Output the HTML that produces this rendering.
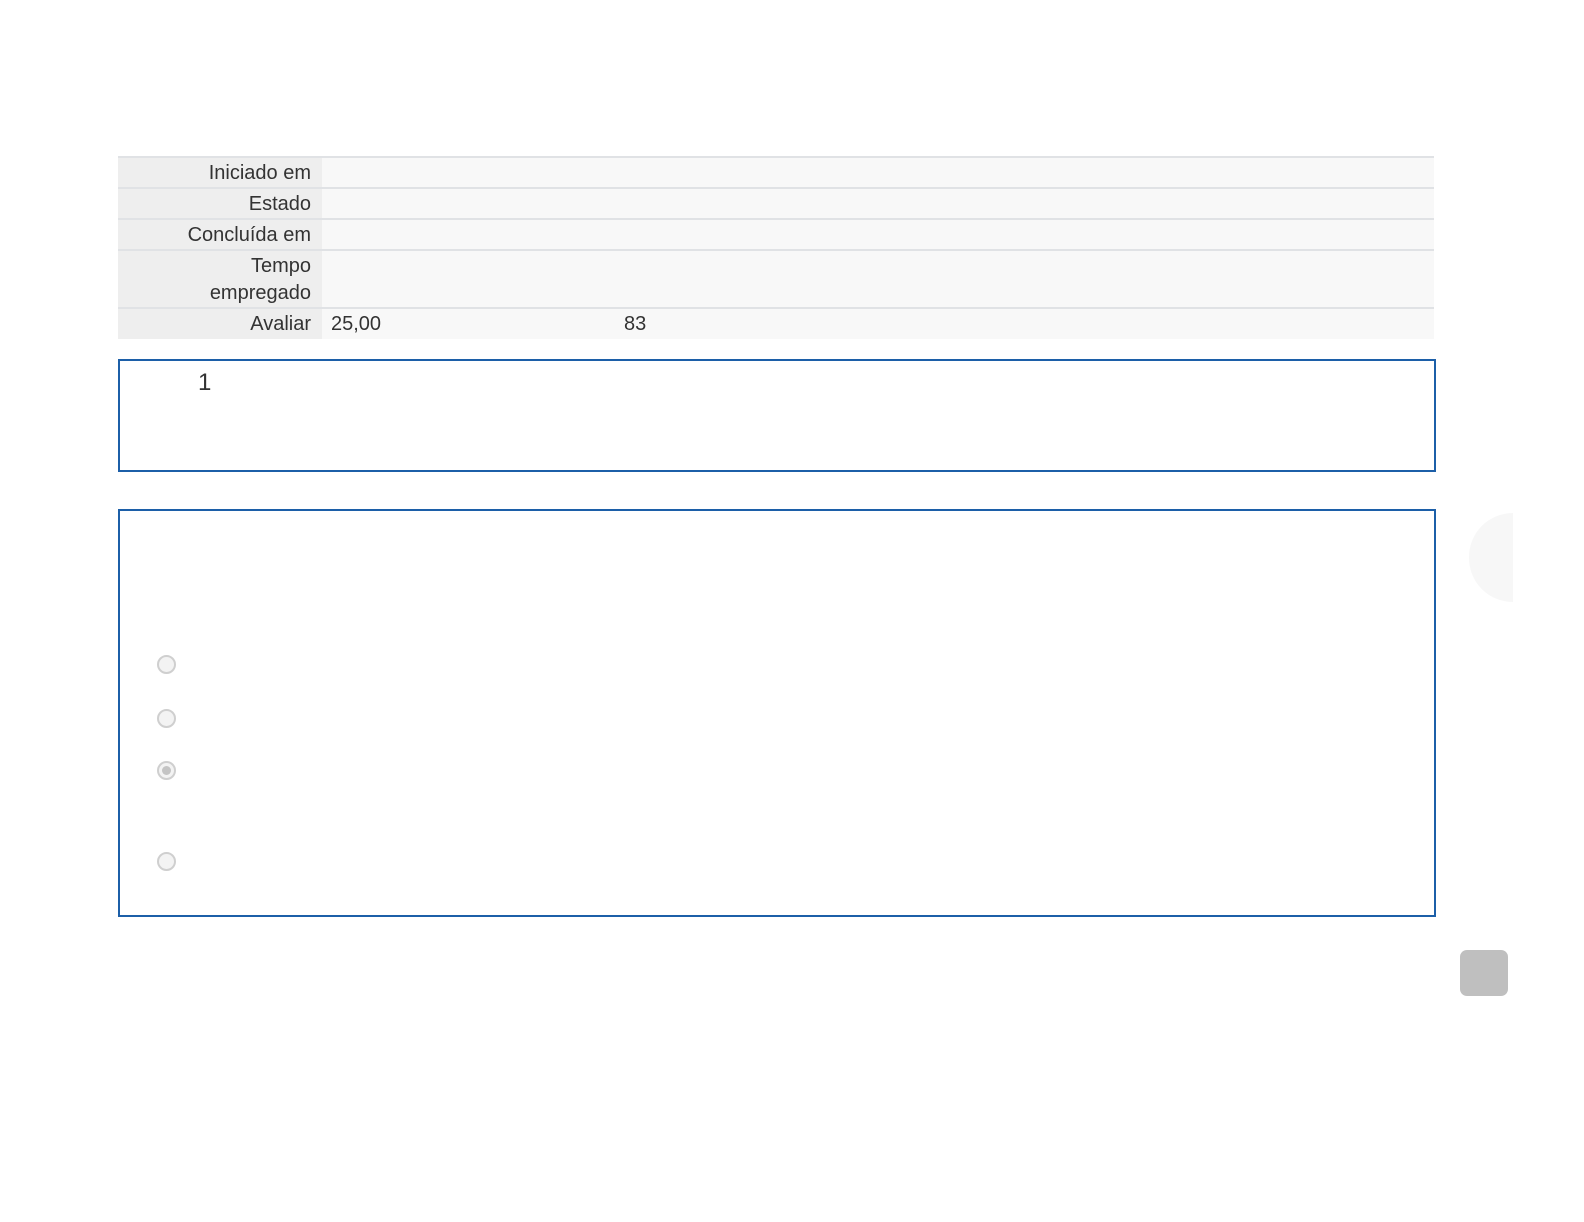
<!DOCTYPE html>
<html><head><meta charset="utf-8"><style>
body{margin:0;width:1584px;height:1222px;background:#fff;position:relative;font-family:"Liberation Sans",sans-serif;color:#333;overflow:hidden}
.row{position:absolute;left:118px;width:1316px;background:#f8f8f8;border-top:2px solid #e0e2e5;box-sizing:border-box}
.lab{position:absolute;left:0;top:0;bottom:0;width:204px;background:#eeeeee;text-align:right;box-sizing:border-box;padding-right:11px;font-size:20px;line-height:27px;padding-top:2px;color:#333}
.val{position:absolute;top:2px;font-size:20px;line-height:27px}
.box{position:absolute;left:118px;width:1318px;border:2px solid #1c5fa8;box-sizing:border-box}
.r{position:absolute;left:157px;width:19px;height:19px;border-radius:50%;border:2px solid #cfcfcf;background:#f3f3f3;box-sizing:border-box}
</style></head><body>
<div class="row" style="top:156px;height:33px"><div class="lab">Iniciado em</div></div>
<div class="row" style="top:187px;height:33px"><div class="lab">Estado</div></div>
<div class="row" style="top:218px;height:33px"><div class="lab">Concluída em</div></div>
<div class="row" style="top:249px;height:60px"><div class="lab">Tempo<br>empregado</div></div>
<div class="row" style="top:307px;height:32px"><div class="lab">Avaliar</div><div class="val" style="left:213px">25,00</div><div class="val" style="left:506px">83</div></div>
<div class="box" style="top:359px;height:113px"><div style="position:absolute;left:78px;top:8px;font-size:24px">1</div></div>
<div class="box" style="top:509px;height:408px"></div>
<div class="r" style="top:655px"></div>
<div class="r" style="top:709px"></div>
<div class="r" style="top:761px"><div style="position:absolute;left:3px;top:3px;width:9px;height:9px;border-radius:50%;background:#c4c4c4"></div></div>
<div class="r" style="top:852px"></div>
<div style="position:absolute;left:1469px;top:513px;width:44px;height:89px;background:#f7f7f7;border-radius:44px 0 0 44px"></div>
<div style="position:absolute;left:1460px;top:950px;width:48px;height:46px;background:#bfbfbf;border-radius:7px"></div>
</body></html>
